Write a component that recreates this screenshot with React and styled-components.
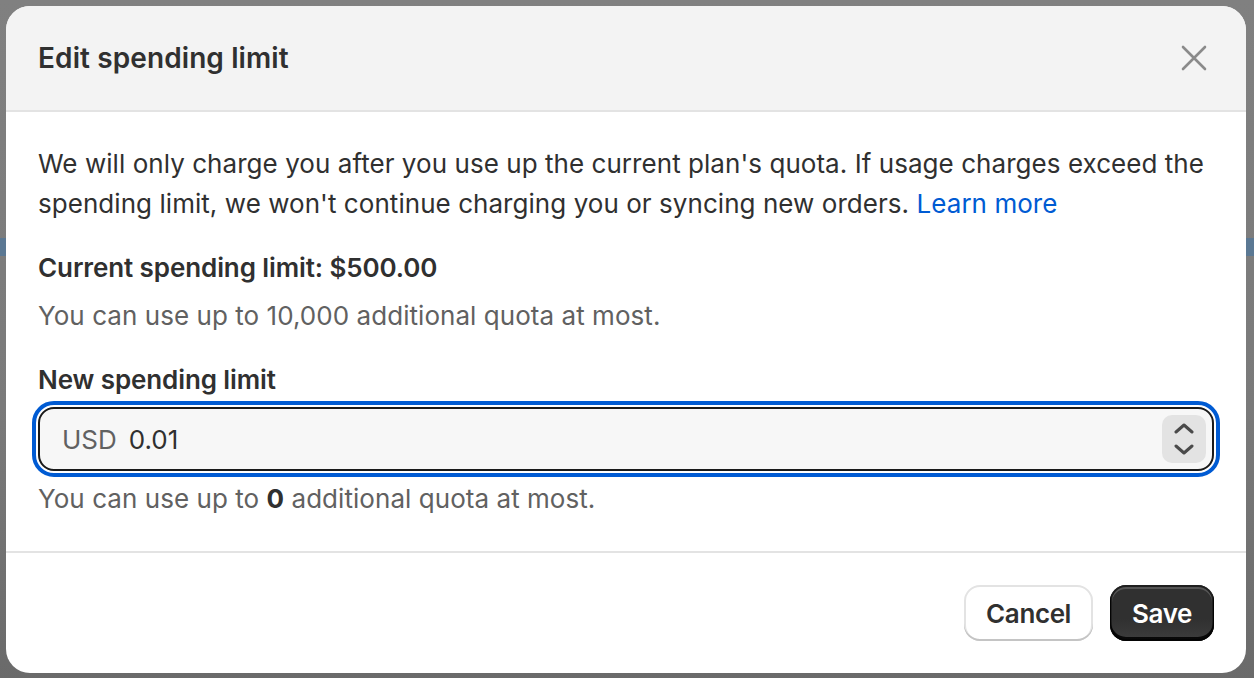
import React from "react";
import styled, { createGlobalStyle } from "styled-components";

const GlobalStyle = createGlobalStyle`
  * { box-sizing: border-box; }
  html, body { margin: 0; padding: 0; }
  body {
    font-family: Inter, "Noto Sans", "Liberation Sans", sans-serif;
    color: #303030;
    -webkit-font-smoothing: antialiased;
  }
`;

const Backdrop = styled.div`
  min-height: 100vh;
  padding: 6px;
  background:
    linear-gradient(to bottom, transparent 238px, #5b7893 238px, #5b7893 256px, transparent 256px),
    linear-gradient(to bottom, #808080 0%, #7a7a7a 60%, #6a6a6a 100%);
`;

const Modal = styled.div`
  width: 1240px;
  border-radius: 24px;
  background: #ffffff;
  overflow: hidden;
  display: flex;
  flex-direction: column;
`;

const Header = styled.div`
  display: flex;
  align-items: center;
  justify-content: space-between;
  padding: 32px;
  background: #f3f3f3;
  border-bottom: 2px solid #e3e3e3;
`;

const Title = styled.h2`
  margin: 0;
  font-size: 28px;
  line-height: 40px;
  font-weight: 600;
  letter-spacing: 0.1px;
  color: #303030;
`;

const CloseButton = styled.button`
  width: 40px;
  height: 40px;
  padding: 0;
  border: 0;
  background: transparent;
  display: flex;
  align-items: center;
  justify-content: center;
  cursor: pointer;
`;

const Body = styled.div`
  padding: 32px;
  display: flex;
  flex-direction: column;
`;

const Text = styled.p`
  margin: ${(p) => p.$top || 0}px 0 0;
  font-size: 26px;
  line-height: 40px;
  letter-spacing: ${(p) => (p.$strong ? "-0.1px" : "0.05px")};
  font-weight: ${(p) => (p.$strong ? 600 : 400)};
  color: ${(p) => (p.$subdued ? "#616161" : "#303030")};
`;

const Link = styled.a`
  color: #005bd3;
  text-decoration: none;
`;

const Strong = styled.b`
  font-weight: 700;
  color: #303030;
`;

const InputBox = styled.div`
  margin-top: 7px;
  height: 64px;
  display: flex;
  align-items: center;
  padding: 0 6px 0 22px;
  border: 2px solid #1a1a1a;
  border-radius: 16px;
  background: #f7f7f7;
  outline: 4px solid #005bd3;
  outline-offset: 2px;
  font-size: 26px;
`;

const Prefix = styled.span`
  color: #616161;
  margin-right: 12px;
`;

const Value = styled.span`
  flex: 1;
  color: #303030;
`;

const Spinner = styled.div`
  width: 44px;
  height: 48px;
  border-radius: 10px;
  background: #e3e3e3;
  display: flex;
  flex-direction: column;
  padding: 3px 0;
`;

const SpinHalf = styled.div`
  flex: 1;
  display: flex;
  align-items: center;
  justify-content: center;
`;

const Footer = styled.div`
  border-top: 2px solid #e3e3e3;
  padding: 32px;
  display: flex;
  justify-content: flex-end;
  gap: 17px;
`;

const Button = styled.button`
  height: 56px;
  padding: 0 22px;
  border: 0;
  border-radius: 16px;
  font-family: inherit;
  font-size: 26px;
  font-weight: 600;
  letter-spacing: -0.4px;
  cursor: pointer;
  color: ${(p) => (p.$primary ? "#ffffff" : "#303030")};
  background: ${(p) =>
    p.$primary
      ? "linear-gradient(180deg, #303030 60%, #3d3d3d 100%)"
      : "#ffffff"};
  box-shadow: ${(p) =>
    p.$primary
      ? "inset 0 -3px 0 1px rgba(0,0,0,0.85), inset 0 0 0 2px #1f1f1f, inset 0 2px 0 2px rgba(255,255,255,0.18)"
      : "inset 0 -2px 0 0 #c4c4c4, inset 0 0 0 2px #e3e3e3"};
`;

const Chevron = ({ up }) => (
  <svg width="20" height="11" viewBox="0 0 20 11" fill="none">
    <path
      d={up ? "M2 9L10 2L18 9" : "M2 2L10 9L18 2"}
      stroke="#4a4a4a"
      strokeWidth="3"
      strokeLinecap="round"
      strokeLinejoin="round"
    />
  </svg>
);

export default function App() {
  return (
    <Backdrop>
      <GlobalStyle />
      <Modal>
        <Header>
          <Title>Edit spending limit</Title>
          <CloseButton aria-label="Close">
            <svg width="40" height="40" viewBox="0 0 40 40" fill="none">
              <path
                d="M9 9L31 31M31 9L9 31"
                stroke="#8a8a8a"
                strokeWidth="2.6"
                strokeLinecap="round"
              />
            </svg>
          </CloseButton>
        </Header>
        <Body>
          <Text>
            We will only charge you after you use up the current plan's quota. If usage charges exceed the
            spending limit, we won't continue charging you or syncing new orders.{" "}
            <Link href="#">Learn more</Link>
          </Text>
          <Text $strong $top={24}>Current spending limit: $500.00</Text>
          <Text $subdued $top={8}>You can use up to 10,000 additional quota at most.</Text>
          <Text $strong $top={24}>New spending limit</Text>
          <InputBox>
            <Prefix>USD</Prefix>
            <Value>0.01</Value>
            <Spinner>
              <SpinHalf>
                <Chevron up />
              </SpinHalf>
              <SpinHalf>
                <Chevron />
              </SpinHalf>
            </Spinner>
          </InputBox>
          <Text $subdued $top={8}>
            You can use up to <Strong>0</Strong> additional quota at most.
          </Text>
        </Body>
        <Footer>
          <Button>Cancel</Button>
          <Button $primary>Save</Button>
        </Footer>
      </Modal>
    </Backdrop>
  );
}
